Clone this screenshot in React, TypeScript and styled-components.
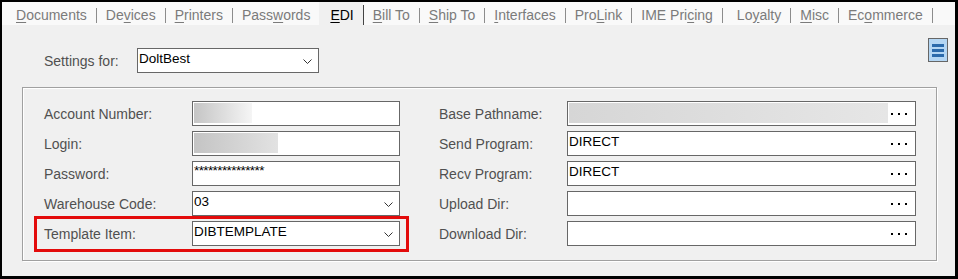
import React from "react";
import styled, { createGlobalStyle, css } from "styled-components";

const Global = createGlobalStyle`
  html, body { margin: 0; padding: 0; background: #ffffff; }
  * { box-sizing: border-box; }
  body { font-family: "Liberation Sans", Arial, sans-serif; }
`;

const Frame = styled.div`
  width: 958px;
  height: 279px;
  border-style: solid;
  border-color: #000;
  border-width: 2px 3px 3px 2px;
  background: #f0f0f0;
  display: flex;
  flex-direction: column;
  overflow: hidden;
`;

const TabBar = styled.div`
  height: 23px;
  flex: none;
  display: flex;
  align-items: stretch;
  padding-left: 5px;
  background: #f9f9f9;
`;

const Tab = styled.div<{ $active?: boolean; $lead?: number; $sep?: boolean }>`
  position: relative;
  display: flex;
  align-items: center;
  padding: 2px 9px 0 ${(p) => 9 + (p.$lead ?? 0)}px;
  margin-right: ${(p) => (p.$sep ? 1 : 0)}px;
  font-size: 14px;
  color: ${(p) => (p.$active ? "#000" : "#7b7b7b")};
  background: ${(p) => (p.$active ? "#f0f0f0" : "transparent")};
  white-space: nowrap;
  ${(p) =>
    p.$sep &&
    css`
      &::after {
        content: "";
        position: absolute;
        right: -1px;
        top: ${p.$active ? 3 : 6}px;
        bottom: ${p.$active ? 0 : 2}px;
        width: 1px;
        background: ${p.$active ? "#444" : "#8c8c8c"};
      }
    `}
  u { text-decoration: underline; text-underline-offset: 2px; }
`;

const Content = styled.div`
  flex: 1;
  display: flex;
  flex-direction: column;
`;

const TopRow = styled.div`
  display: flex;
  justify-content: space-between;
  align-items: flex-start;
  padding: 13px 7px 0 42px;
`;

const SettingsGroup = styled.div`
  display: flex;
  align-items: center;
  margin-top: 10px;
`;

const SettingsLabel = styled.label`
  width: 93px;
  font-size: 14px;
  color: #505050;
`;

const Field = styled.div<{ $w: number }>`
  position: relative;
  width: ${(p) => p.$w}px;
  height: 25px;
  border: 1px solid #676767;
  background: #ffffff;
  display: flex;
  align-items: flex-start;
  padding: 2px 6px 0 1px;
  font-size: 13.5px;
  line-height: 16px;
  color: #000;
`;

const FieldText = styled.span<{ $mask?: boolean }>`
  flex: 1;
  white-space: nowrap;
  overflow: hidden;
  ${(p) =>
    p.$mask &&
    css`
      letter-spacing: -0.6px;
      line-height: 14px;
    `}
`;

const Chevron = styled.svg`
  align-self: center;
  flex: none;
  margin-top: -1px;
`;

const Redacted = styled.div<{ $w: number; $from: string; $to: string }>`
  width: ${(p) => p.$w}px;
  height: 20px;
  margin-top: -1px;
  background: linear-gradient(90deg, ${(p) => p.$from}, ${(p) => p.$to});
`;

const Dots = styled.div`
  position: absolute;
  right: 8px;
  top: 0;
  bottom: 0;
  display: flex;
  align-items: center;
  gap: 5px;
  span {
    width: 2px;
    height: 2px;
    background: #000;
  }
`;

const MenuButton = styled.button`
  width: 20px;
  height: 24px;
  padding: 0;
  border: 1px solid #666;
  background: #b4d6f3;
  display: flex;
  flex-direction: column;
  align-items: center;
  justify-content: center;
  gap: 2px;
  span {
    width: 12px;
    height: 3px;
    background: #2b6aab;
  }
`;

const GroupBox = styled.div`
  margin: 14px 18px 0 20px;
  border: 1px solid #a0a0a0;
  box-shadow: inset 1px 1px 0 #ffffff, 1px 1px 0 #ffffff;
  padding: 13px 20px 14px 21px;
  display: flex;
  gap: 39px;
`;

const Column = styled.div`
  display: flex;
  flex-direction: column;
  gap: 5px;
`;

const Row = styled.div<{ $label: number; $highlight?: boolean }>`
  position: relative;
  display: grid;
  grid-template-columns: ${(p) => p.$label}px auto;
  align-items: center;
  height: 25px;
  ${(p) =>
    p.$highlight &&
    css`
      &::after {
        content: "";
        position: absolute;
        left: -10px;
        top: -5px;
        right: -9px;
        bottom: -6px;
        border: 3px solid #e30b0b;
        pointer-events: none;
      }
    `}
`;

const Label = styled.label`
  font-size: 14px;
  color: #505050;
  white-space: nowrap;
`;

type TabDef = { pre: string; u: string; post: string; lead?: number; active?: boolean; sep?: boolean };

const tabs: TabDef[] = [
  { pre: "", u: "D", post: "ocuments", sep: true },
  { pre: "De", u: "v", post: "ices", sep: true },
  { pre: "", u: "P", post: "rinters", sep: true },
  { pre: "Pass", u: "w", post: "ords", sep: false },
  { pre: "", u: "E", post: "DI", active: true, sep: true, lead: 2 },
  { pre: "", u: "B", post: "ill To", sep: true },
  { pre: "", u: "S", post: "hip To", sep: true },
  { pre: "", u: "I", post: "nterfaces", sep: true },
  { pre: "Pro", u: "L", post: "ink", sep: true },
  { pre: "IME Pri", u: "c", post: "ing", sep: true },
  { pre: "Lo", u: "y", post: "alty", sep: true, lead: 5 },
  { pre: "", u: "M", post: "isc", sep: true },
  { pre: "Ec", u: "o", post: "mmerce", sep: true },
];

const ChevronIcon = () => (
  <Chevron width="9" height="5" viewBox="0 0 9 5">
    <polyline points="0.5,0.5 4.5,4.5 8.5,0.5" fill="none" stroke="#333" strokeWidth="1" />
  </Chevron>
);

const Browse = () => (
  <Dots>
    <span />
    <span />
    <span />
  </Dots>
);

export default function App() {
  return (
    <>
      <Global />
      <Frame>
        <TabBar>
          {tabs.map((t, i) => (
            <Tab key={i} $active={t.active} $lead={t.lead} $sep={t.sep}>
              {t.pre}
              <u>{t.u}</u>
              {t.post}
            </Tab>
          ))}
        </TabBar>
        <Content>
          <TopRow>
            <SettingsGroup>
              <SettingsLabel>Settings for:</SettingsLabel>
              <Field $w={182}>
                <FieldText>DoltBest</FieldText>
                <ChevronIcon />
              </Field>
            </SettingsGroup>
            <MenuButton aria-label="menu">
              <span />
              <span />
              <span />
            </MenuButton>
          </TopRow>
          <GroupBox>
            <Column>
              <Row $label={148}>
                <Label>Account Number:</Label>
                <Field $w={208}>
                  <Redacted $w={58} $from="#c5c5c5" $to="#f5f5f5" />
                </Field>
              </Row>
              <Row $label={148}>
                <Label>Login:</Label>
                <Field $w={208}>
                  <Redacted $w={84} $from="#c4c4c4" $to="#e2e2e2" />
                </Field>
              </Row>
              <Row $label={148}>
                <Label>Password:</Label>
                <Field $w={208}>
                  <FieldText $mask>***************</FieldText>
                </Field>
              </Row>
              <Row $label={148}>
                <Label>Warehouse Code:</Label>
                <Field $w={208}>
                  <FieldText>03</FieldText>
                  <ChevronIcon />
                </Field>
              </Row>
              <Row $label={148} $highlight>
                <Label>Template Item:</Label>
                <Field $w={208}>
                  <FieldText>DIBTEMPLATE</FieldText>
                  <ChevronIcon />
                </Field>
              </Row>
            </Column>
            <Column>
              <Row $label={128}>
                <Label>Base Pathname:</Label>
                <Field $w={349}>
                  <Redacted $w={319} $from="#d6d6d6" $to="#e6e6e6" />
                  <Browse />
                </Field>
              </Row>
              <Row $label={128}>
                <Label>Send Program:</Label>
                <Field $w={349}>
                  <FieldText>DIRECT</FieldText>
                  <Browse />
                </Field>
              </Row>
              <Row $label={128}>
                <Label>Recv Program:</Label>
                <Field $w={349}>
                  <FieldText>DIRECT</FieldText>
                  <Browse />
                </Field>
              </Row>
              <Row $label={128}>
                <Label>Upload Dir:</Label>
                <Field $w={349}>
                  <Browse />
                </Field>
              </Row>
              <Row $label={128}>
                <Label>Download Dir:</Label>
                <Field $w={349}>
                  <Browse />
                </Field>
              </Row>
            </Column>
          </GroupBox>
        </Content>
      </Frame>
    </>
  );
}
